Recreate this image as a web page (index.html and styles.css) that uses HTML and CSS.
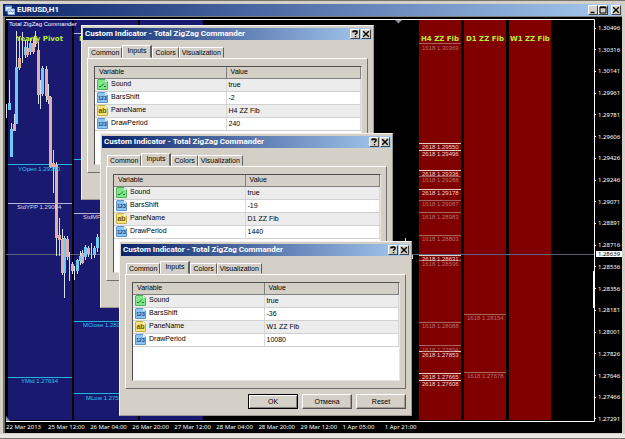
FILE: index.html
```html
<!DOCTYPE html>
<html lang="en">
<head>
<meta charset="utf-8">
<title>EURUSD,H1</title>
<link rel="stylesheet" href="styles.css">
</head>
<body>
<svg class="defs" aria-hidden="true">
  <symbol id="i-bool" viewBox="0 0 11 11"><path d="M1 .5h7l2.500 2.500v7.500H.5V1z" fill="#7fe68a" stroke="#4fae5c"/><path d="M8 .5V3h2.500z" fill="#e9ffec"/><path d="M2 7.500h2l3-3M7 7.500h2" fill="none" stroke="#11702a"/></symbol>
  <symbol id="i-num" viewBox="0 0 11 11"><path d="M1 .5h7l2.500 2.500v7.500H.5V1z" fill="#8cc4f2" stroke="#5b95cc"/><path d="M8 .5V3h2.500z" fill="#eaf6ff"/><text x="5.500" y="8" class="glyph glyph-num">123</text></symbol>
  <symbol id="i-str" viewBox="0 0 11 11"><path d="M1 .5h7l2.500 2.500v7.500H.5V1z" fill="#f3e57c" stroke="#c2ae44"/><path d="M8 .5V3h2.500z" fill="#fffbe0"/><text x="5.500" y="8" class="glyph glyph-str">ab</text></symbol>
  <symbol id="i-help" viewBox="0 0 8 8"><path d="M2 2.500V1.500h1V1h2v.5h1V3L4.500 4.200V5M4.500 6v1.200" fill="none" stroke="#000" stroke-width="1.300"/></symbol>
  <symbol id="i-close" viewBox="0 0 8 8"><path d="M1.200 1.200l5.600 5.600M6.800 1.200L1.200 6.800" stroke="#000" stroke-width="1.400"/></symbol>
  <symbol id="i-min" viewBox="0 0 8 8"><path d="M1.500 6.500h4" stroke="#000" stroke-width="1.500"/></symbol>
  <symbol id="i-max" viewBox="0 0 8 8"><path d="M1 1.500h6" stroke="#000" stroke-width="1.500"/><path d="M1 1h6v6H1z" fill="none" stroke="#000"/></symbol>
</svg>

<main class="window">
  <header class="titlebar">
    <svg class="app-icon" viewBox="0 0 10 10"><path d="M.5 1h6v5h-6z" fill="#dcebff" stroke="#7fa9e0"/><path d="M.5 1.500h6" stroke="#4d86d6"/><path d="M3 4h6.500v5.500H3z" fill="#f2f8ff" stroke="#7fa9e0"/><path d="M4 7l2-1.500L7 7l2-1" fill="none" stroke="#4d86d6"/></svg>
    <h1 class="title">EURUSD,H1</h1>
    <button class="cap" aria-label="Minimize"><svg><use href="#i-min"/></svg></button>
    <button class="cap" aria-label="Maximize"><svg><use href="#i-max"/></svg></button>
    <button class="cap cap-close" aria-label="Close"><svg><use href="#i-close"/></svg></button>
  </header>

  <section class="chart">
    <svg class="plot" viewBox="6 19 589 403" preserveAspectRatio="none">
      <g fill="#191970"><path d="M8 20h64v400H8zM74 20h64v400H74zM140 20h63v400h-63z"/></g>
      <g fill="#800000"><path d="M419 20h42v400h-42zM464 20h42v400h-42zM509 20h42v400h-42z"/></g>
      <path d="M6 254.500h588" stroke="#5b6474"/>
      <g class="cyan-line"><path d="M8 164.500h64M74 159.500h64M74 321.500h64M8 377.500h64M74 393.500h64"/></g>
      <g class="pale-line"><path d="M8 203.500h64M74 213.500h64M74 33.500h64"/></g>
      <path class="wick" d="M6.500 104v14M9.500 80v30M11.500 123v34M14.500 114v17M16.500 31v93M19.500 37v33M22.500 32v31M25.500 40v18M27.500 41v16M30.500 38v17M33.500 38v16M35.500 31v16M38.500 42v62M40.500 80v29M42.500 66v30M46.500 66v36M48.500 84v20M50.500 96v72M53.500 150v43M56.500 162v94M59.500 218v38M62.500 229v46M64.500 236v62M67.500 236v24M69.500 252v29M72.500 262v12M74.500 266v14M77.500 259v15M80.500 251v14M82.500 250v14M85.500 245v15M88.500 246v11M91.500 243v16M94.500 246v12M97.500 234v18M405.500 238v8M412.500 255v4"/>
      <path class="bull" d="M9.500 103v7M11.500 129v28M16.500 67v57M25.500 47v8M30.500 43v9M42.500 68v26M64.500 238v35M77.500 260v11M80.500 256v5M85.500 247v10M94.500 248v7M97.500 237v11"/>
      <path class="bear" d="M14.500 124v7M19.500 58v10M27.500 48v7M33.500 43v9M35.500 36v8M38.500 50v45M46.500 69v27M48.500 96v4M50.500 97v70M53.500 163v4M56.500 165v73M59.500 235v5M62.500 239v34M67.500 239v18M72.500 264v7M82.500 253v10M88.500 248v6"/>
      <g class="pivot">
        <text x="16" y="41">Yearly Pivot</text><text x="79" y="41">Monthly Pivot</text>
        <text x="421" y="41">H4 ZZ Fib</text><text x="466" y="41">D1 ZZ Fib</text><text x="510" y="41">W1 ZZ Fib</text>
      </g>
      <g class="label">
        <text x="9" y="26" fill="#fff">Total ZigZag Commander</text>
        <g fill="#28c8f0"><text x="18" y="171">YOpen 1.29380</text><text x="21" y="383">YMid 1.27634</text><text x="83" y="327">MClose 1.28091</text><text x="86" y="400">MLow 1.27501</text></g>
        <g fill="#d8d8e8"><text x="17" y="209">StdYPP 1.29064</text><text x="83" y="219">StdMPP 1.28980</text></g>
      </g>
      <path class="fib-dim-line" d="M419 43.500h42M419 176.500h42M419 200.500h42M419 212.500h42M419 235.500h42M419 260.500h42M419 322.500h42M419 345.500h42M464 314.500h42M464 372.500h42"/>
      <path class="fib-line" d="M419 143.500h42M419 150.500h42M419 170.500h42M419 189.500h42M419 255.500h42M419 351.500h42M419 373.500h42M419 380.500h42"/>
      <g class="label" fill="#b07070">
        <text x="422" y="50">1618 1.30369</text><text x="422" y="182">1618 1.29288</text><text x="422" y="206">1618 1.29087</text><text x="422" y="219">1618 1.28983</text><text x="422" y="241">1618 1.28803</text><text x="422" y="266">1618 1.28596</text><text x="422" y="328">1618 1.28088</text><text x="422" y="352">1618 1.27894</text><text x="467" y="320">1618 1.28154</text><text x="467" y="378">1618 1.27678</text>
      </g>
      <g class="label" fill="#ecd4d4">
        <text x="422" y="149">2618 1.29550</text><text x="422" y="156">2618 1.29496</text><text x="422" y="176">2618 1.29336</text><text x="422" y="195">2618 1.29178</text><text x="422" y="261">2618 1.28631</text><text x="422" y="357">2618 1.27853</text><text x="422" y="379">2618 1.27665</text><text x="422" y="386">2618 1.27608</text>
      </g>
      <path d="M395 20h7l-3.500 3.500z" fill="#8a929e"/><path d="M6 416v5h4z" fill="#8a929e"/>
      <path d="M6 19.500h588.500V421.500H6" fill="none" stroke="#fff"/>
      <path d="M593.500 271v37" stroke="#fff"/>
    </svg>
    <ol class="prices">
      <li>1.30496</li><li>1.30316</li><li>1.30141</li><li>1.29961</li><li>1.29781</li><li>1.29606</li><li>1.29426</li><li>1.29246</li><li>1.29071</li><li>1.28891</li><li>1.28716</li><li>1.28536</li><li>1.28356</li><li>1.28181</li><li>1.28001</li><li>1.27826</li><li>1.27646</li><li>1.27466</li><li>1.27291</li>
    </ol>
    <span class="current">1.28639</span>
    <ol class="times">
      <li>22 Mar 2013</li><li>25 Mar 12:00</li><li>26 Mar 04:00</li><li>26 Mar 20:00</li><li>27 Mar 12:00</li><li>28 Mar 04:00</li><li>28 Mar 20:00</li><li>29 Mar 12:00</li><li>1 Apr 05:00</li><li>1 Apr 21:00</li>
    </ol>
  </section>
  <footer class="strip"></footer>

  <section class="dialog dialog-h4" role="dialog" aria-labelledby="t1">
    <header class="titlebar"><h2 class="title" id="t1">Custom Indicator - Total ZigZag Commander</h2><button class="cap" aria-label="Help"><svg><use href="#i-help"/></svg></button><button class="cap cap-end" aria-label="Close"><svg><use href="#i-close"/></svg></button></header>
    <nav class="tabs"><button class="tab">Common</button><button class="tab active">Inputs</button><button class="tab">Colors</button><button class="tab">Visualization</button></nav>
    <div class="pane"><div class="list"><table>
      <thead><tr><th class="name">Variable</th><th>Value</th></tr></thead>
      <tbody>
        <tr><td><svg><use href="#i-bool"/></svg>Sound</td><td>true</td></tr>
        <tr><td><svg><use href="#i-num"/></svg>BarsShift</td><td>-2</td></tr>
        <tr><td><svg><use href="#i-str"/></svg>PaneName</td><td>H4 ZZ Fib</td></tr>
        <tr><td><svg><use href="#i-num"/></svg>DrawPeriod</td><td>240</td></tr>
      </tbody></table></div></div>
    <div class="actions"><button class="btn default">OK</button><button class="btn">Отмена</button><button class="btn">Reset</button></div>
  </section>

  <section class="dialog dialog-d1" role="dialog" aria-labelledby="t2">
    <header class="titlebar"><h2 class="title" id="t2">Custom Indicator - Total ZigZag Commander</h2><button class="cap" aria-label="Help"><svg><use href="#i-help"/></svg></button><button class="cap cap-end" aria-label="Close"><svg><use href="#i-close"/></svg></button></header>
    <nav class="tabs"><button class="tab">Common</button><button class="tab active">Inputs</button><button class="tab">Colors</button><button class="tab">Visualization</button></nav>
    <div class="pane"><div class="list"><table>
      <thead><tr><th class="name">Variable</th><th>Value</th></tr></thead>
      <tbody>
        <tr><td><svg><use href="#i-bool"/></svg>Sound</td><td>true</td></tr>
        <tr><td><svg><use href="#i-num"/></svg>BarsShift</td><td>-19</td></tr>
        <tr><td><svg><use href="#i-str"/></svg>PaneName</td><td>D1 ZZ Fib</td></tr>
        <tr><td><svg><use href="#i-num"/></svg>DrawPeriod</td><td>1440</td></tr>
      </tbody></table></div></div>
    <div class="actions"><button class="btn default">OK</button><button class="btn">Отмена</button><button class="btn">Reset</button></div>
  </section>

  <section class="dialog dialog-w1" role="dialog" aria-labelledby="t3">
    <header class="titlebar"><h2 class="title" id="t3">Custom Indicator - Total ZigZag Commander</h2><button class="cap" aria-label="Help"><svg><use href="#i-help"/></svg></button><button class="cap cap-end" aria-label="Close"><svg><use href="#i-close"/></svg></button></header>
    <nav class="tabs"><button class="tab">Common</button><button class="tab active">Inputs</button><button class="tab">Colors</button><button class="tab">Visualization</button></nav>
    <div class="pane"><div class="list"><table>
      <thead><tr><th class="name">Variable</th><th>Value</th></tr></thead>
      <tbody>
        <tr><td><svg><use href="#i-bool"/></svg>Sound</td><td>true</td></tr>
        <tr><td><svg><use href="#i-num"/></svg>BarsShift</td><td>-36</td></tr>
        <tr><td><svg><use href="#i-str"/></svg>PaneName</td><td>W1 ZZ Fib</td></tr>
        <tr><td><svg><use href="#i-num"/></svg>DrawPeriod</td><td>10080</td></tr>
      </tbody></table></div></div>
    <div class="actions"><button class="btn default">OK</button><button class="btn">Отмена</button><button class="btn">Reset</button></div>
  </section>
</main>
</body>
</html>
```
FILE: styles.css
```css
* { box-sizing: border-box; }
body, h1, h2, ol { margin: 0; padding: 0; }
body { background: #d4d0c8; font: 7px/10px "Liberation Sans", sans-serif; color: #000; }
button { font: inherit; color: inherit; margin: 0; padding: 0; border-radius: 0; background: #d4d0c8; }
ol { list-style: none; }
.defs { position: absolute; width: 0; height: 0; }

.window { position: relative; display: flex; flex-direction: column; min-height: 100vh; border-top: 1px solid #77746e; padding: 3px 3px 0; }
.titlebar { display: flex; align-items: center; height: 12px; flex: none; background: linear-gradient(90deg, #0a246a, #a6caf0); color: #fff; padding: 0 1px 0 2px; }
.title { flex: 1; font: bold 8px/12px Roboto, "Liberation Sans", sans-serif; white-space: nowrap; }
.app-icon { width: 10px; height: 10px; margin-right: 2px; }
.cap { display: flex; width: 10px; height: 10px; border: 1px solid; border-color: #fff #404040 #404040 #fff; }
.cap svg { width: 8px; height: 8px; }
.cap-close { margin-left: 3px; }
.cap-end { margin-left: 1px; }

.chart { position: relative; flex: 1; display: grid; grid-template: minmax(0, 1fr) 11px / minmax(0, 1fr) 27px; background: #000; color: #fff; border-top: 1px solid #808080; border-left: 2px solid #77746e; padding: 2px 0 0 1px; font: 6px/6px "Noto Sans", sans-serif; }
.plot { display: block; width: 100%; height: 100%; min-height: 0; }
.prices { display: flex; flex-direction: column; justify-content: space-between; padding: 6px 0 0; }
.prices li { display: flex; align-items: center; gap: 2px; }
.prices li::before { content: ""; width: 1px; height: 1px; background: #fff; }
.current { position: absolute; right: 0; top: 57%; transform: translateY(-50%); background: #fff; color: #000; padding: 0 1px; width: 26px; text-align: center; }
.times { grid-column: 1 / -1; display: grid; grid-template-columns: repeat(14, 1fr); padding-right: 27px; line-height: 10px; white-space: nowrap; }
.strip { height: 6px; flex: none; border-bottom: 1px solid #77746e; border-top: 1px solid #d4d0c8; background: #e8e6e0; margin: 0 -3px 1px; }

.pivot { font: bold 7px "DejaVu Sans", sans-serif; fill: #b8f030; }
.label { font: 6px "Liberation Sans", sans-serif; }
.cyan-line { stroke: #20b8e0; }
.pale-line { stroke: #b8b8d8; }
.wick { stroke: #d8e0f0; stroke-width: 1; }
.bull { stroke: #70c8f4; stroke-width: 3; }
.bear { stroke: #e0b0a8; stroke-width: 3; }
.fib-dim-line { stroke: #a86060; }
.fib-line { stroke: #e8cccc; }

.dialog { position: absolute; width: 293px; background: #d4d0c8; border: 1px solid; border-color: #f4f3f0 #9c988f #9c988f #f4f3f0; padding: 2px 1px 6px; }
.dialog-h4 { left: 81px; top: 24px; }
.dialog-d1 { left: 100px; top: 132px; }
.dialog-w1 { left: 119px; top: 240px; }
.tabs { display: flex; align-items: flex-end; height: 18px; padding-left: 5px; }
.tab { height: 11px; padding: 0 2px; border: 1px solid; border-color: #fff #606060 transparent #fff; }
.tab.active { height: 13px; padding: 0 4px 2px; border-right-width: 2px; }
.pane { margin: 0 4px 5px; padding: 7px 5px 7px 6px; border: 1px solid; border-color: #fff #707070 #707070 #fff; }
.list { height: 99px; background: #fff; border: 1px solid; border-color: #505050 #e8e6e0 #e8e6e0 #505050; }
.list table { width: 100%; border-collapse: collapse; table-layout: fixed; }
.list th { height: 11px; padding: 0 4px; background: #d4d0c8; border-right: 1px solid #808080; border-bottom: 1px solid #808080; text-align: left; font-weight: normal; }
.list .name { width: 131px; }
.list td { height: 13px; padding: 0 2px; border-right: 1px solid #d8d8d8; border-bottom: 1px solid #d0d0d0; white-space: nowrap; }
.list tr:nth-child(odd) td { background: #ececec; }
.list td svg { width: 11px; height: 11px; margin-right: 3px; vertical-align: middle; }
.glyph { text-anchor: middle; fill: #123c78; font: bold 5px "Liberation Sans", sans-serif; }
.glyph-str { fill: #6a5600; font-size: 7px; }
.actions { display: flex; justify-content: flex-end; gap: 4px; padding-right: 4px; }
.btn { width: 50px; height: 15px; border: 1px solid; border-color: #fff #505050 #505050 #fff; box-shadow: inset -1px -1px #a09c94; }
.btn.default { border-color: #000; box-shadow: inset 1px 1px #fff, inset -1px -1px #808080; }
```
